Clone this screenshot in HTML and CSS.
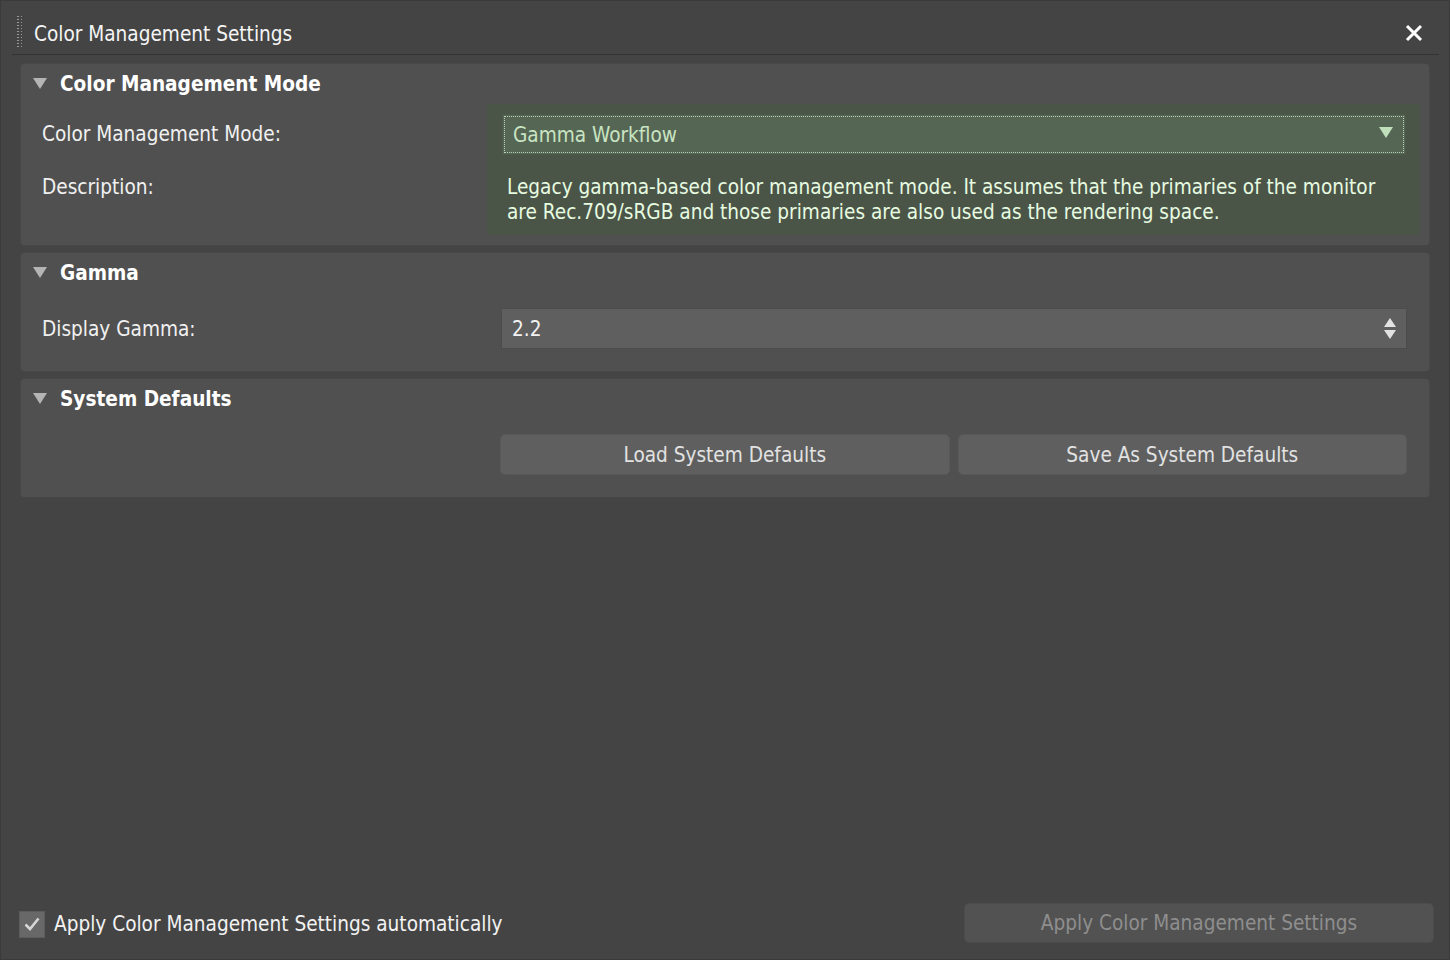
FILE: index.html
```html
<!DOCTYPE html>
<html>
<head>
<meta charset="utf-8">
<title>Color Management Settings</title>
<link rel="stylesheet" href="styles.css">
</head>
<body>
<div class="window">
  <div class="titlebar">
    <div class="grip"></div>
    <div class="title">Color Management Settings</div>
    <div class="close">
      <svg width="18" height="18" viewBox="0 0 18 18"><path d="M2 2 L16 16 M16 2 L2 16" stroke="#ffffff" stroke-width="3" fill="none"/></svg>
    </div>
  </div>

  <div class="content">
    <section class="panel">
      <div class="panel-head"><span class="tri"></span><span class="head-text">Color Management Mode</span></div>
      <div class="mode-body">
        <div class="labels">
          <div class="lbl lbl-mode">Color Management Mode:</div>
          <div class="lbl lbl-desc">Description:</div>
        </div>
        <div class="green">
          <div class="dropdown">
            <span class="dd-text">Gamma Workflow</span>
            <span class="dd-arrow"></span>
          </div>
          <div class="desc">Legacy gamma-based color management mode. It assumes that the primaries of the monitor are Rec.709/sRGB and those primaries are also used as the rendering space.</div>
        </div>
      </div>
    </section>

    <section class="panel">
      <div class="panel-head"><span class="tri"></span><span class="head-text">Gamma</span></div>
      <div class="row-body">
        <div class="lbl row-lbl">Display Gamma:</div>
        <div class="spinner">
          <span class="spin-val">2.2</span>
          <span class="spin-arrows"><span class="up"></span><span class="down"></span></span>
        </div>
      </div>
    </section>

    <section class="panel">
      <div class="panel-head"><span class="tri"></span><span class="head-text">System Defaults</span></div>
      <div class="row-body btn-body">
        <button class="btn">Load System Defaults</button>
        <button class="btn">Save As System Defaults</button>
      </div>
    </section>
  </div>

  <div class="footer">
    <label class="check">
      <span class="box">
        <svg width="20" height="20" viewBox="0 0 20 20"><path d="M3.5 10.5 L8 15 L16.5 4.5" stroke="#d6d6d6" stroke-width="2.6" fill="none"/></svg>
      </span>
      <span class="check-text">Apply Color Management Settings automatically</span>
    </label>
    <button class="apply">Apply Color Management Settings</button>
  </div>
</div>
</body>
</html>
```

FILE: styles.css
```css
* { box-sizing: border-box; }
html, body { margin: 0; padding: 0; }
body {
  width: 1450px;
  height: 960px;
  background: #444444;
  font-family: "DejaVu Sans Condensed", "DejaVu Sans", sans-serif;
  font-size: 20.6px;
  color: #f2f2f2;
  overflow: hidden;
}
.window {
  width: 1450px;
  height: 960px;
  border: 1px solid #3a3a3a;
  display: flex;
  flex-direction: column;
}
.titlebar {
  height: 54px;
  margin: 0 10px 0 11px;
  border-bottom: 1px solid #333333;
  display: flex;
  align-items: center;
  position: relative;
}
.grip {
  width: 6px;
  height: 34px;
  margin-left: 4px;
  margin-top: 14px;
  background-image: radial-gradient(circle, #9a9a9a 0.9px, transparent 1.1px);
  background-size: 4px 3px;
  background-position: 0 0;
  align-self: flex-start;
}
.title {
  margin-left: 12px;
  margin-top: 12px;
  color: #f4f4f4;
}
.close {
  margin-left: auto;
  margin-right: 16px;
  margin-top: 10px;
  display: flex;
}
.content {
  padding: 8px 19px 0 19px;
  display: flex;
  flex-direction: column;
  gap: 6px;
  flex: 1;
}
.panel {
  background: #505050;
  border: 1px solid #474747;
  border-radius: 4px;
}
.panel-head {
  height: 40px;
  display: flex;
  align-items: center;
  padding-left: 12px;
}
.tri {
  width: 0;
  height: 0;
  border-left: 7px solid transparent;
  border-right: 7px solid transparent;
  border-top: 11px solid #b4b4b4;
  margin-right: 13px;
  margin-top: -2px;
}
.head-text {
  font-weight: bold;
  font-size: 20.6px;
  color: #ffffff;
}
.mode-body {
  display: flex;
  padding: 0 9px 10px 21px;
}
.labels {
  width: 445px;
  display: flex;
  flex-direction: column;
}
.lbl { color: #f0f0f0; }
.lbl-mode {
  margin-top: 10px;
  height: 41px;
  line-height: 41px;
}
.lbl-desc {
  margin-top: 20px;
  line-height: 25px;
}
.green {
  flex: 1;
  background: #4a5447;
  padding: 10px 14px 10px 15px;
}
.dropdown {
  height: 41px;
  background: #566654;
  border: 1px solid #4b5a49;
  outline: 1px dotted #bcd0b8;
  outline-offset: -3px;
  display: flex;
  align-items: center;
  padding: 0 12px 0 10px;
}
.dd-text { color: #c8e4c2; }
.dd-arrow {
  margin-left: auto;
  width: 0;
  height: 0;
  border-left: 7px solid transparent;
  border-right: 7px solid transparent;
  border-top: 11px solid #bfe0bb;
  margin-top: -4px;
}
.desc {
  margin-top: 20px;
  padding-left: 5px;
  padding-right: 20px;
  line-height: 25px;
  color: #e6fbe0;
}
.row-body {
  display: flex;
  align-items: center;
  padding: 15px 22px 22px 21px;
}
.row-lbl {
  width: 459px;
}
.spinner {
  flex: 1;
  height: 41px;
  background: #5f5f5f;
  border: 1px solid #4c4c4c;
  display: flex;
  align-items: center;
  padding: 0 10px 0 10px;
}
.spin-val { color: #f2f2f2; }
.spin-arrows {
  margin-left: auto;
  display: flex;
  flex-direction: column;
  gap: 3px;
}
.spin-arrows .up {
  width: 0; height: 0;
  border-left: 6px solid transparent;
  border-right: 6px solid transparent;
  border-bottom: 9px solid #e2e2e2;
}
.spin-arrows .down {
  width: 0; height: 0;
  border-left: 6px solid transparent;
  border-right: 6px solid transparent;
  border-top: 9px solid #e2e2e2;
}
.btn-body {
  padding-left: 479px;
  gap: 8px;
}
.btn {
  flex: 1;
  height: 41px;
  background: #5f5f5f;
  border: 1px solid #585858;
  border-radius: 5px;
  font-family: inherit;
  font-size: 20.6px;
  color: #e2e2e2;
  padding: 0;
}
.footer {
  display: flex;
  align-items: center;
  padding: 0 15px 15px 18px;
  height: 58px;
}
.check {
  display: flex;
  align-items: center;
  margin-top: 3px;
}
.box {
  width: 26px;
  height: 27px;
  background: #686868;
  border: 1px solid #5c5c5c;
  display: flex;
  align-items: center;
  justify-content: center;
}
.check-text {
  margin-left: 9px;
  color: #f2f2f2;
}
.apply {
  margin-left: auto;
  width: 470px;
  height: 40px;
  background: #525252;
  border: 1px solid #4c4c4c;
  border-radius: 5px;
  font-family: inherit;
  font-size: 20.6px;
  color: #8e8e8e;
  padding: 0;
}
```
